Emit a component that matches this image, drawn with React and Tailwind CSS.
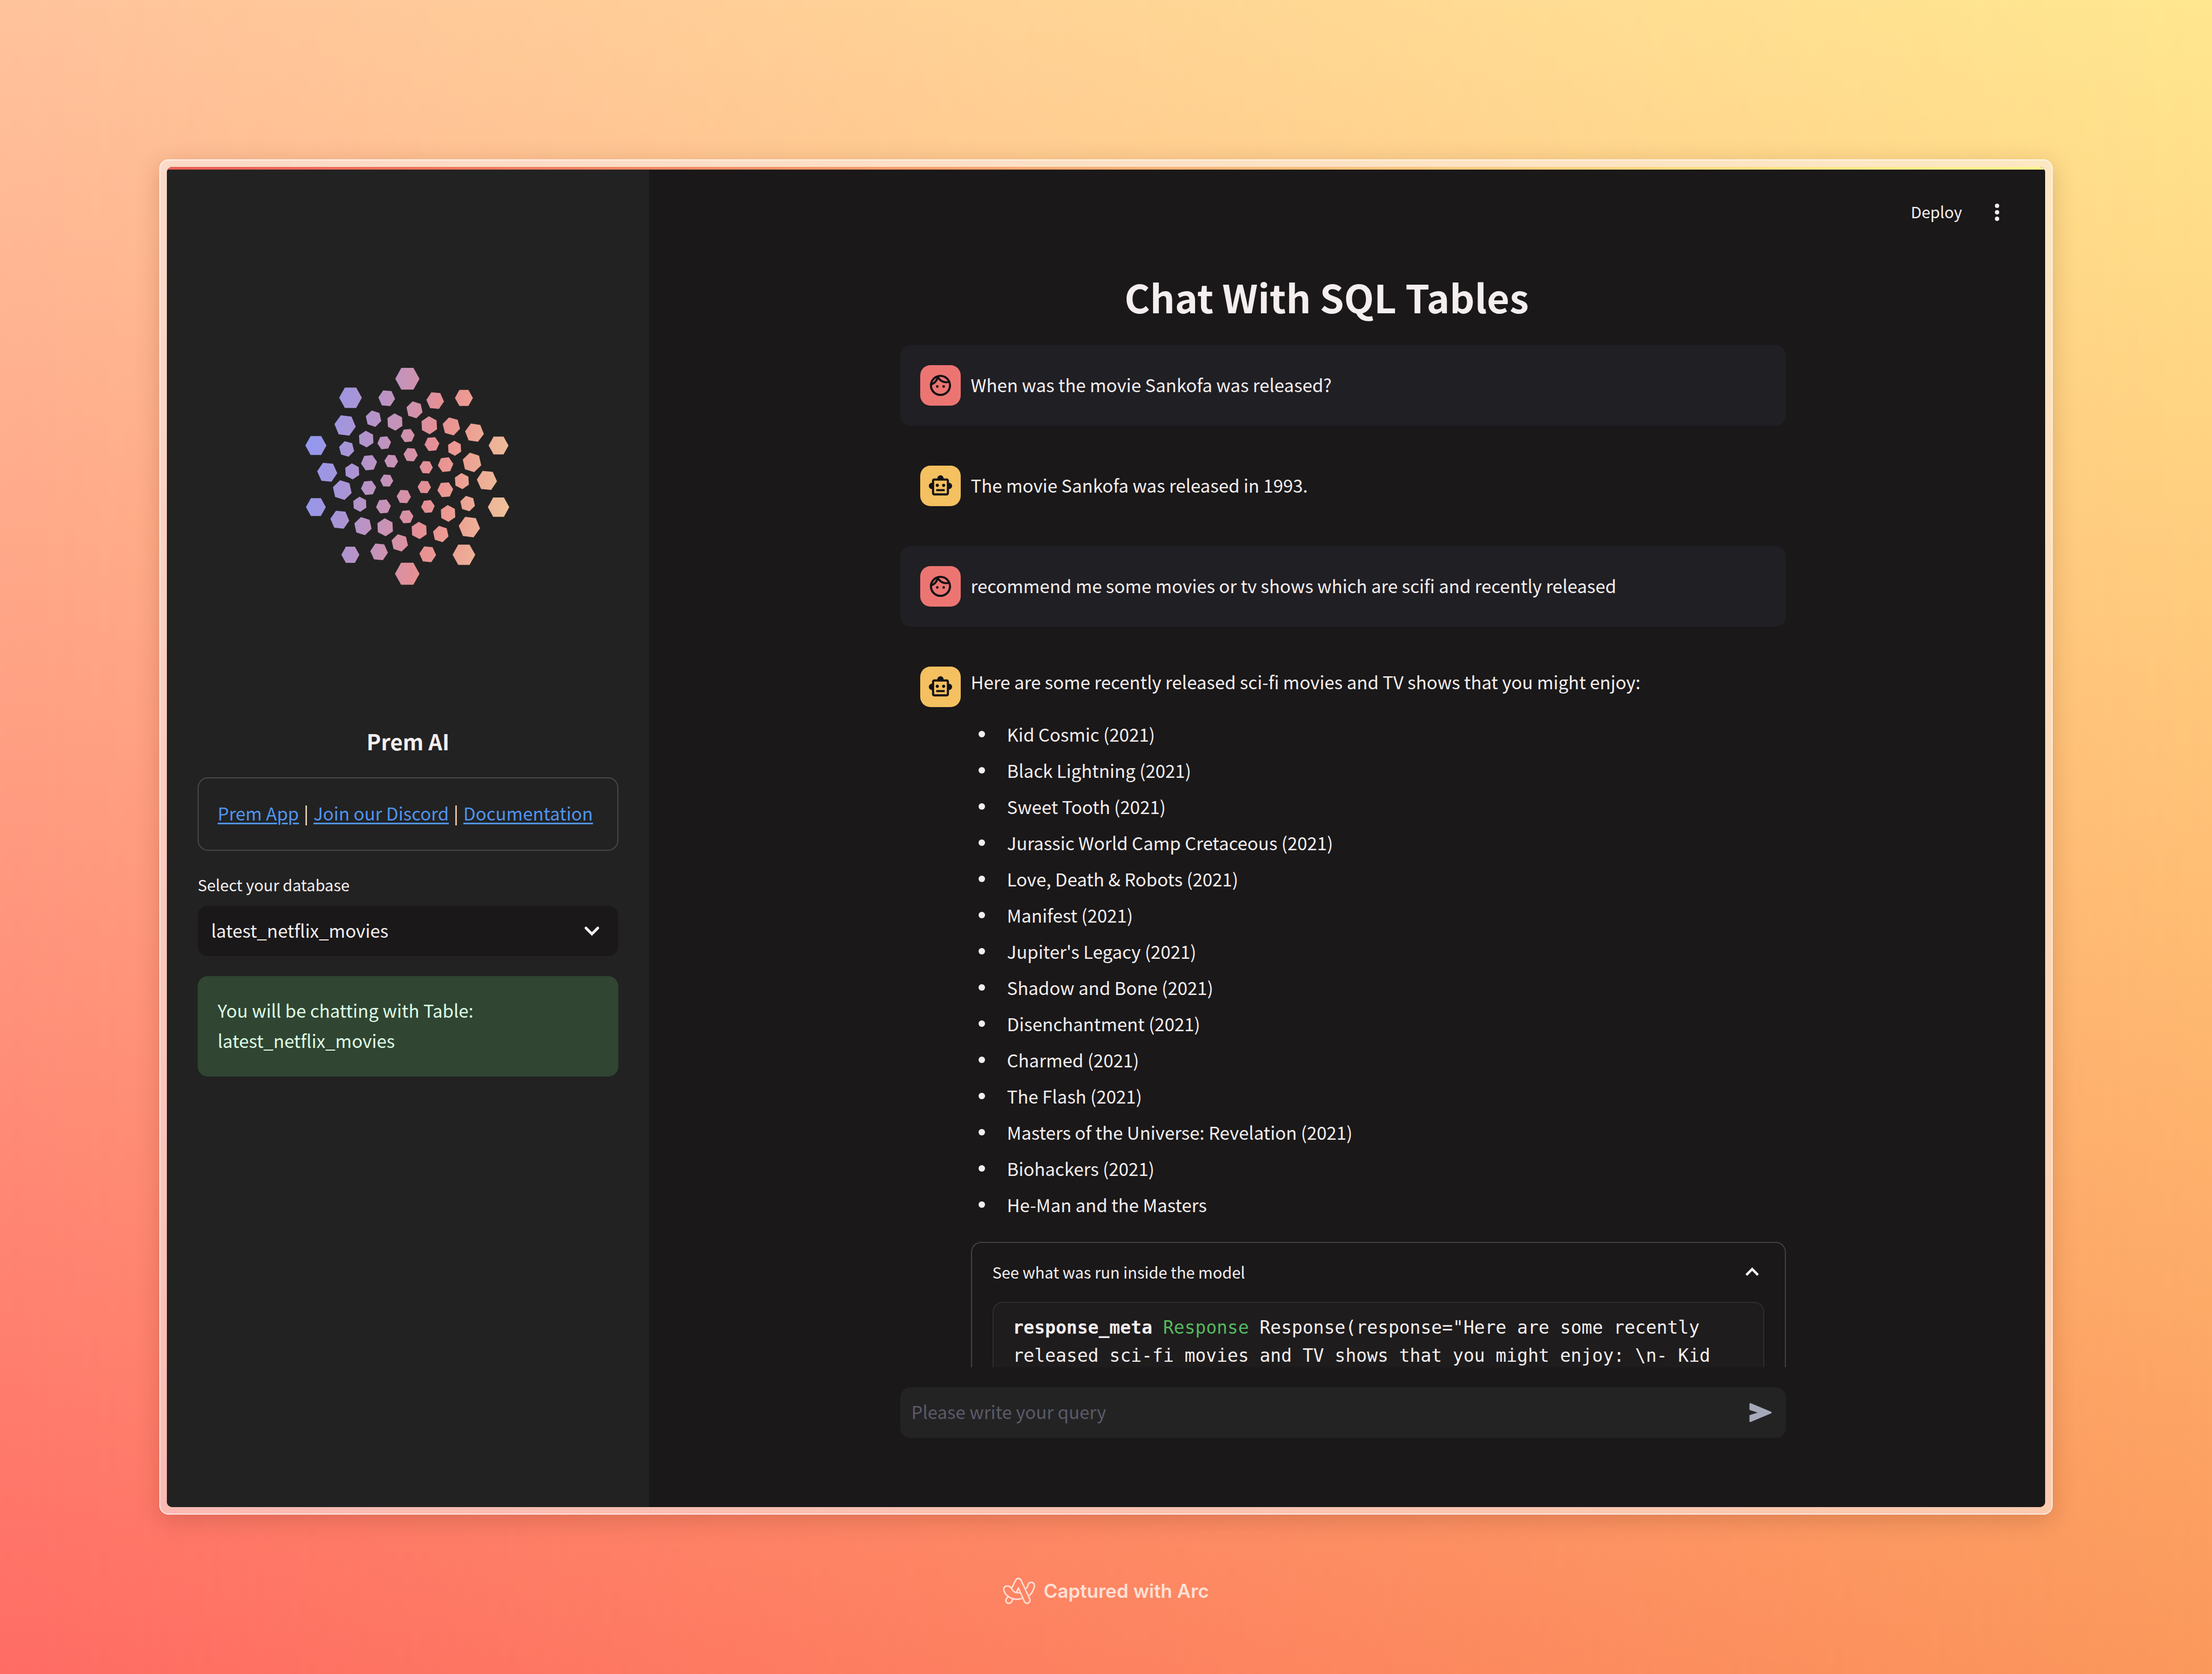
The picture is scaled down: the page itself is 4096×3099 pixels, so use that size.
import React from "react";
import { MdOutlineFace, MdOutlineSmartToy } from "react-icons/md";

const HEXES = [
  [780, 192, 78, 0], [414, 310, 73, 0], [1144, 311, 58, 0], [191, 607, 68, 0], [1367, 607, 64, 0],
  [191, 990, 64, 0], [1367, 990, 69, 0], [413, 1286, 58, 0], [1144, 1286, 73, 0], [779, 1404, 79, 0],
  [647, 313, 54, 5], [826, 385, 54, 17], [959, 328, 57, 5], [562, 440, 52, 17], [700, 461, 54, 27],
  [921, 481, 56, 27], [1063, 488, 58, 15], [1212, 527, 61, 8], [379, 482, 69, 7], [515, 567, 52, 27],
  [631, 590, 44, -6], [782, 545, 45, -5], [938, 598, 48, -5], [1084, 624, 47, 27], [389, 628, 50, 15],
  [801, 664, 46, 4], [676, 704, 44, 4], [533, 714, 52, -6], [901, 742, 43, 3], [1026, 726, 50, -6],
  [1196, 712, 62, 17], [425, 768, 50, 27], [264, 773, 65, 5], [1292, 824, 65, 5], [1131, 828, 50, 26],
  [647, 825, 42, 3], [889, 865, 43, 3], [1024, 882, 51, -4], [530, 870, 49, -5], [361, 884, 63, 17],
  [757, 924, 46, 3], [1168, 968, 49, 17], [474, 972, 47, 27], [626, 986, 48, -5], [912, 986, 44, -5],
  [1042, 1029, 52, 27], [345, 1068, 61, 6], [774, 1050, 45, -5], [494, 1108, 58, 17], [637, 1115, 56, 27],
  [1179, 1114, 69, 7], [856, 1135, 54, 27], [995, 1157, 52, 17], [731, 1212, 55, 17], [598, 1268, 57, 5],
  [911, 1283, 54, 5],
];

function hexPoints([cx, cy, r, rot]) {
  return [0, 60, 120, 180, 240, 300]
    .map((a) => {
      const t = ((a + rot) * Math.PI) / 180;
      return `${(cx + r * Math.cos(t)).toFixed(1)},${(cy + r * Math.sin(t)).toFixed(1)}`;
    })
    .join(" ");
}

function PremLogo() {
  return (
    <svg viewBox="0 0 1568 1568" preserveAspectRatio="none" className="h-[467px] w-[451px]" role="img" aria-label="Prem logo">
      <defs>
        <linearGradient id="prem" gradientUnits="userSpaceOnUse" x1="140" y1="680" x2="1430" y2="890">
          <stop offset="0" stopColor="#9398ee" />
          <stop offset="0.22" stopColor="#ab94d4" />
          <stop offset="0.42" stopColor="#c893b6" />
          <stop offset="0.6" stopColor="#e58f95" />
          <stop offset="0.72" stopColor="#ec9a92" />
          <stop offset="1" stopColor="#eec09a" />
        </linearGradient>
      </defs>
      <g fill="url(#prem)">
        {HEXES.map((h) => (
          <polygon key={`${h[0]}-${h[1]}`} points={hexPoints(h)} />
        ))}
      </g>
    </svg>
  );
}

function Avatar({ kind }) {
  return kind === "user" ? (
    <span className="flex size-[75px] shrink-0 items-center justify-center rounded-[19px] bg-[#ec7572] text-[#131214]">
      <MdOutlineFace className="size-[47px]" />
    </span>
  ) : (
    <span className="flex size-[75px] shrink-0 items-center justify-center rounded-[19px] bg-[#f4c060] text-[#131214]">
      <MdOutlineSmartToy className="size-[47px]" />
    </span>
  );
}

function Message({ kind, children }) {
  return (
    <article className={`flex items-center gap-[19px] rounded-[19px] p-[37px] ${kind === "user" ? "bg-[#201f24]" : ""}`}>
      <Avatar kind={kind} />
      <p className="pb-1">{children}</p>
    </article>
  );
}

const MOVIES = [
  "Kid Cosmic (2021)",
  "Black Lightning (2021)",
  "Sweet Tooth (2021)",
  "Jurassic World Camp Cretaceous (2021)",
  "Love, Death & Robots (2021)",
  "Manifest (2021)",
  "Jupiter's Legacy (2021)",
  "Shadow and Bone (2021)",
  "Disenchantment (2021)",
  "Charmed (2021)",
  "The Flash (2021)",
  "Masters of the Universe: Revelation (2021)",
  "Biohackers (2021)",
  "He-Man and the Masters",
];

function Sidebar() {
  return (
    <aside className="flex w-[893px] shrink-0 flex-col bg-[#222222] px-[57px] pt-[330px]">
      <div className="flex justify-center">
        <PremLogo />
      </div>
      <h2 className="mt-[231px] text-center text-[40px] leading-[60px] font-bold">Prem AI</h2>
      <nav className="mt-[37px] flex h-[136px] items-center gap-[9px] rounded-[19px] border-2 border-[#474747] px-[35px] pb-1 whitespace-nowrap">
        <a href="#app" className="text-[#5094f0] underline decoration-3 underline-offset-4">Prem App</a>
        <span>|</span>
        <a href="#discord" className="text-[#5094f0] underline decoration-3 underline-offset-4">Join our Discord</a>
        <span>|</span>
        <a href="#docs" className="text-[#5094f0] underline decoration-3 underline-offset-4">Documentation</a>
      </nav>
      <label htmlFor="database" className="mt-[38px] text-[29px] leading-[48px]">Select your database</label>
      <div className="mt-[16px] grid items-center">
        <select
          id="database"
          className="col-start-1 row-start-1 h-[93px] w-full appearance-none rounded-[19px] bg-[#1a1819] px-[25px] pb-1"
        >
          <option>latest_netflix_movies</option>
        </select>
        <svg viewBox="0 0 30 22" className="pointer-events-none col-start-1 row-start-1 mr-[34px] h-[22px] w-[30px] justify-self-end" fill="none" stroke="#f4eeee" strokeWidth="5">
          <path d="M4 5l11 11 11-11" strokeLinecap="round" />
        </svg>
      </div>
      <p role="status" className="mt-[37px] rounded-[19px] bg-[#304532] px-[37px] pt-[35px] pb-[39px] leading-[56px] text-[#dffde6]">
        You will be chatting with Table: latest_netflix_movies
      </p>
    </aside>
  );
}

function ModelRun() {
  return (
    <section className="mt-[39px] rounded-t-[19px] border-2 border-b-0 border-[#434142] px-[38px]">
      <button type="button" aria-expanded="true" className="flex h-[109px] w-full items-center justify-between pb-1 text-[29px]">
        See what was run inside the model
        <svg viewBox="0 0 30 20" className="mr-[9px] h-[18px] w-[27px]" fill="none" stroke="#f4eeee" strokeWidth="5">
          <path d="M3 17L15 5l12 12" />
        </svg>
      </button>
      <div className="rounded-t-[19px] border-2 border-b-0 border-[#2f2d2e] bg-[#1e1c1d] px-[36px] py-[20px] font-['DejaVu_Sans_Mono',monospace] text-[33px] leading-[52px]">
        <b>response_meta</b> <span className="text-[#57b85f]">Response</span>
        {' Response(response="Here are some recently released sci-fi movies and TV shows that you might enjoy: \\n- Kid Cosmic (2021)'}
      </div>
    </section>
  );
}

function Chat() {
  return (
    <main className="flex min-w-0 flex-1 flex-col bg-[#1a1819]">
      <header className="flex h-[158px] shrink-0 items-center justify-end gap-[58px] pr-[82px]">
        <button type="button" className="pb-1 text-[29px]">Deploy</button>
        <button type="button" aria-label="Main menu">
          <svg viewBox="0 0 14 34" className="h-[34px] w-[14px]" fill="#f4eeee">
            <circle cx="7" cy="5" r="4" />
            <circle cx="7" cy="17" r="4" />
            <circle cx="7" cy="29" r="4" />
          </svg>
        </button>
      </header>
      <div className="mr-[16px] flex min-h-0 flex-1 flex-col items-center">
        <div className="flex min-h-0 w-full max-w-[1640px] flex-1 flex-col overflow-hidden">
          <h1 className="pt-[22px] pr-[60px] pb-[35px] text-center text-[72px] leading-[110px] font-bold">Chat With SQL Tables</h1>
          <div className="flex flex-col gap-[37px]">
            <Message kind="user">When was the movie Sankofa was released?</Message>
            <Message kind="bot">The movie Sankofa was released in 1993.</Message>
            <Message kind="user">recommend me some movies or tv shows which are scifi and recently released</Message>
            <article className="flex items-start gap-[19px] pt-[37px] pl-[37px]">
              <Avatar kind="bot" />
              <div className="-mt-[2px] min-w-0 flex-1">
                <p>Here are some recently released sci-fi movies and TV shows that you might enjoy:</p>
                <ul className="mt-[37px] flex flex-col gap-[7px]">
                  {MOVIES.map((m) => (
                    <li key={m} className="flex items-center gap-[41px] pl-[14px]">
                      <span className="size-[12px] rounded-full bg-[#f4eeee]" />
                      {m}
                    </li>
                  ))}
                </ul>
                <ModelRun />
              </div>
            </article>
          </div>
        </div>
        <form className="mt-[37px] mb-[128px] flex h-[94px] w-full max-w-[1640px] items-center rounded-[19px] bg-[#232323] pr-[24px] pl-[21px]">
          <input type="text" aria-label="Query" placeholder="Please write your query" className="min-w-0 flex-1 bg-transparent pb-1 outline-none placeholder:text-[#5c5a69]" />
          <button type="submit" aria-label="Send">
            <svg viewBox="0 0 46 40" className="h-[40px] w-[46px]" fill="#a6a9bb" stroke="#a6a9bb" strokeWidth="3" strokeLinejoin="round">
              <path d="M4 4L42 20 4 36V26L23 20 4 14z" />
            </svg>
          </button>
        </form>
      </div>
    </main>
  );
}

function ArcLogo() {
  return (
    <svg viewBox="27 25 222 186" className="h-[50px] w-[60px]" fill="none" stroke="currentColor" strokeWidth="10" strokeLinejoin="round" aria-hidden="true">
      <path d="M86 103L114 46Q121 32 133 32Q145 32 152 46L211 172Q219 190 204 201Q187 209 176 194L133 98L120 131" />
      <path d="M86 103Q78 88 66 86Q50 82 38 92Q29 102 34 118Q46 152 84 169Q122 182 158 171" />
      <path d="M86 103Q102 138 147 130" />
      <path d="M187 104Q197 90 200 76Q207 58 226 60Q246 66 243 88Q236 125 209 150" />
      <path d="M63 157L50 175Q43 193 57 202Q75 208 86 195L97 173" />
    </svg>
  );
}

export default function App() {
  return (
    <div className="relative isolate flex h-screen w-full flex-col bg-linear-to-b from-[#ffc39c] to-[#ff6c64] px-[295px] pt-[295px] font-['Noto_Sans_CJK_SC',sans-serif] text-[33px] leading-[60px] text-[#f4eeee]">
      <div className="absolute inset-0 -z-10 bg-linear-to-b from-[#ffe78f] to-[#fb985c] [mask-image:linear-gradient(to_right,transparent,black)]" />
      <div className="flex min-h-0 flex-1 rounded-[17px] border-2 border-white/60 bg-[#f9f0f0]/55 p-[12px] shadow-[0_10px_44px_rgba(90,40,20,0.22)]">
        <div className="flex min-h-0 flex-1 flex-col overflow-hidden rounded-[10px] bg-[#1a1819]">
          <div className="h-[5px] shrink-0 bg-linear-to-r from-[#e95d55] to-[#fff98f]" />
          <div className="flex min-h-0 flex-1">
            <Sidebar />
            <Chat />
          </div>
        </div>
      </div>
      <footer className="flex h-[295px] shrink-0 items-center justify-center gap-[15px] pb-[14px] font-['Inter',sans-serif] text-[35px] font-semibold text-[#ffe0d6]">
        <ArcLogo />
        Captured with Arc
      </footer>
    </div>
  );
}
